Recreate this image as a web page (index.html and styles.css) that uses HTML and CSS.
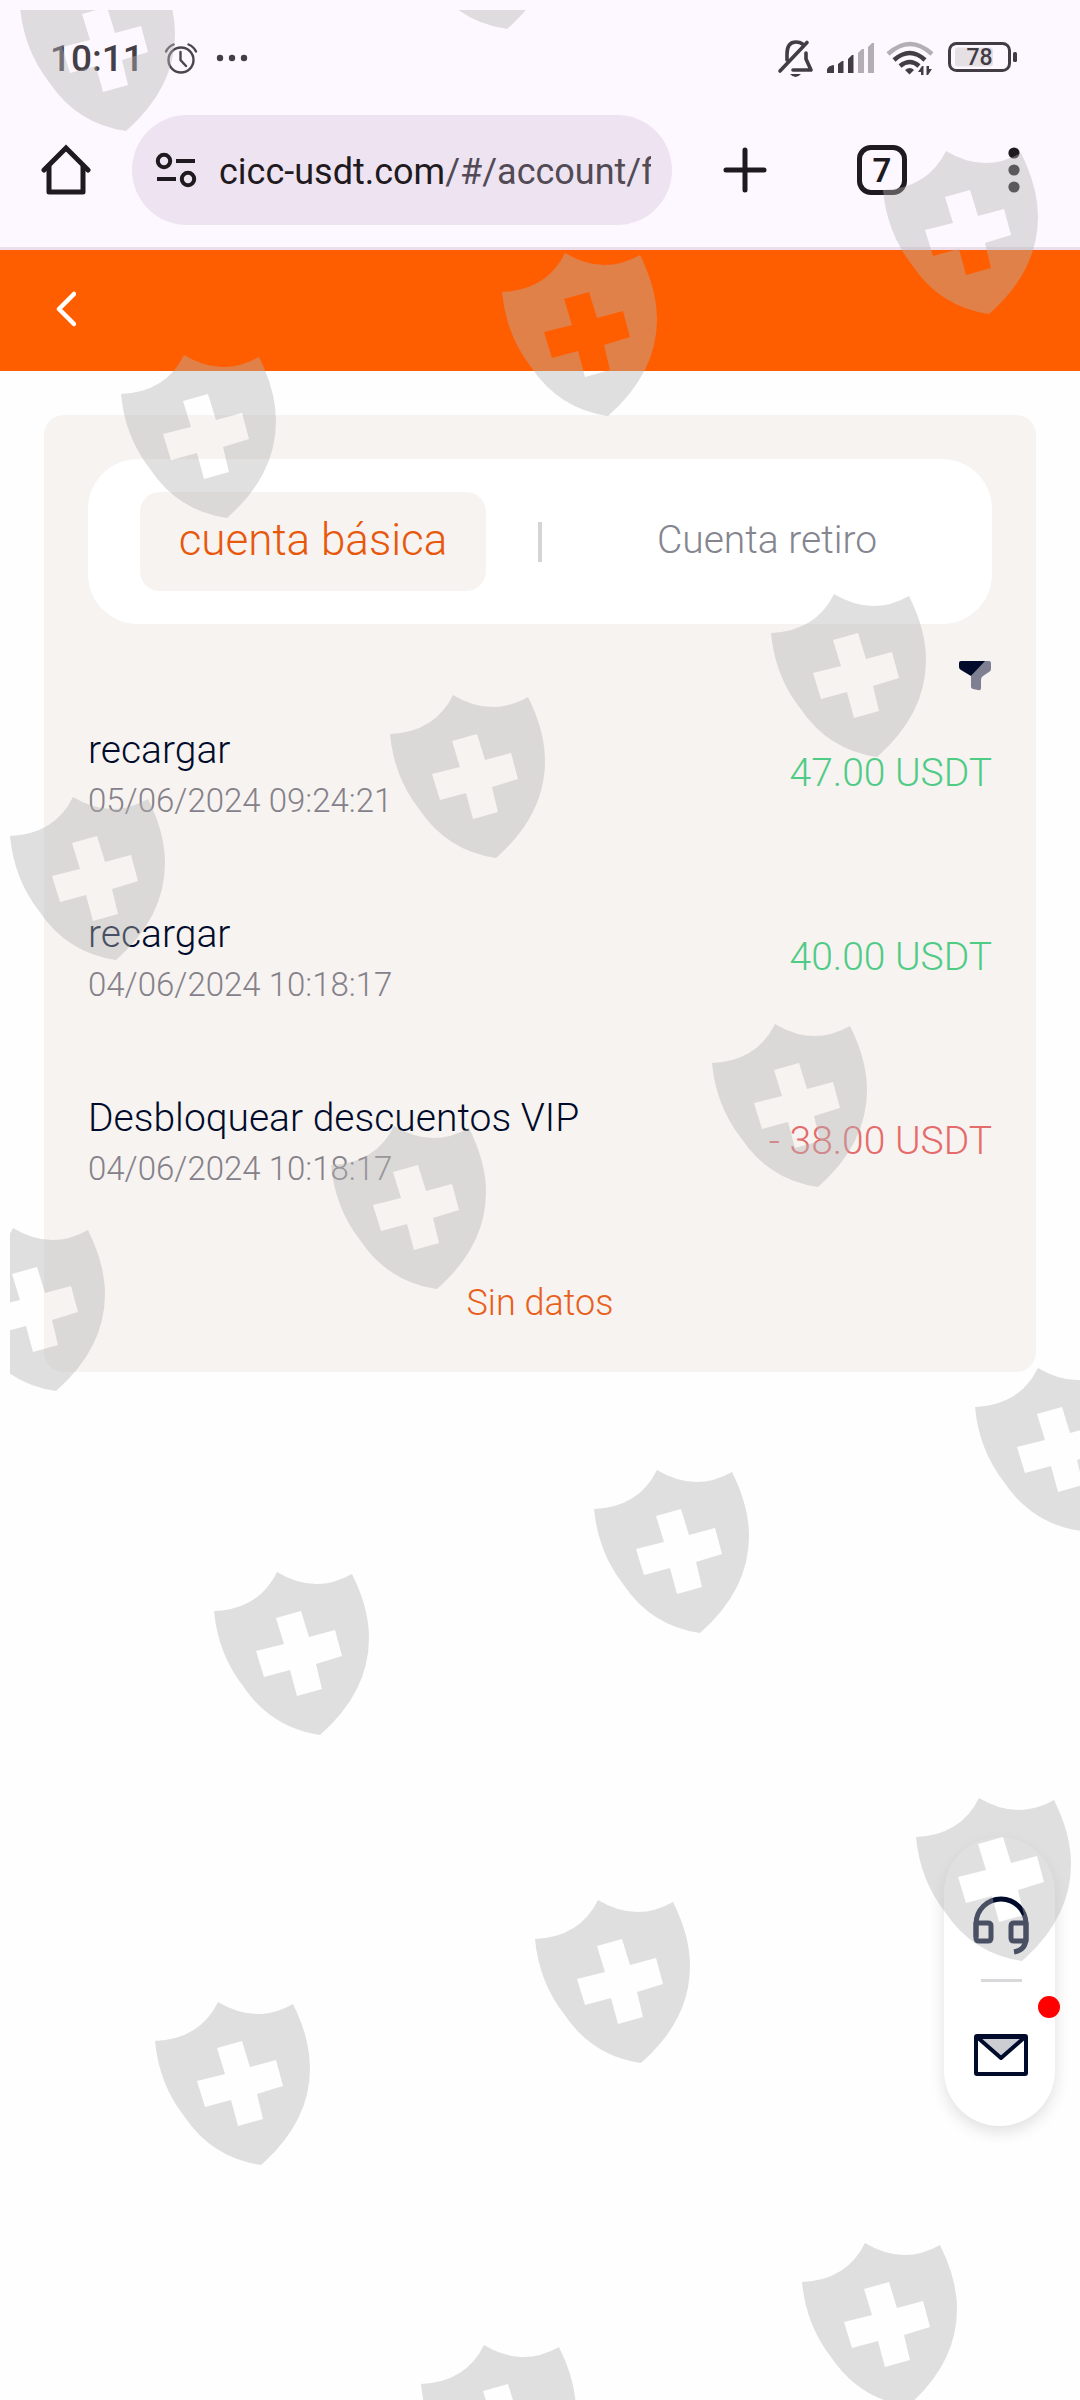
FILE: index.html
```html
<!DOCTYPE html>
<html lang="es">
<head>
<meta charset="utf-8">
<meta name="viewport" content="width=device-width, initial-scale=1">
<title>Cuenta</title>
<link rel="stylesheet" href="styles.css">
</head>
<body>
<div class="screen">
  <header class="browser">
    <div class="status">
      <span class="clock">10:11</span>
      <svg class="alarm" width="34" height="34" viewBox="0 0 34 34" fill="none" stroke="#4b454d" stroke-width="2.4" stroke-linecap="round"><circle cx="17" cy="19" r="12.5"/><path d="M16.500 11v8l5.500 6M2 10.500Q4.500 5.500 9.500 3.500M32 10.500Q29.500 5.500 24.500 3.500"/></svg>
      <svg class="more-dots" width="32" height="8" viewBox="0 0 32 8" fill="#443e46"><circle cx="4" cy="4" r="3.200"/><circle cx="16" cy="4" r="3.200"/><circle cx="28" cy="4" r="3.200"/></svg>
      <svg class="status-icons" width="242" height="44" viewBox="776 36 242 44" fill="#443c44">
        <g fill="none" stroke="#443c44" stroke-width="3.600" stroke-linecap="round" stroke-linejoin="round"><path d="M780 71L807 42.500M787 60V54C787 46 790 42 796 42c3 0 5 .8 6.500 2M806 53v6l5 11H793"/></g><path d="M790 74h11q-5.500 6-11 0z"/>
        <path d="M827 73v-4l2-2.500 4-1.500q1 0 1 1v7zM838 73v-9l4-3h1.500v12zM848 73V59l4-4h1.500v18z"/>
        <path fill="#b4adb5" d="M858 73V53l4-4h2v24zM868 73V47l4-4h2v30z"/>
        <g fill="none" stroke-width="4.500"><path stroke="#b4adb5" d="M888 54Q910 34 932 54"/><path stroke="#443c44" d="M894 60Q910 46 925 60"/><path stroke="#443c44" d="M900 66Q910 58 919 66"/></g>
        <path d="M905 70q5-4 9 0l-4.500 4.500z"/>
        <path d="M923.500 66v9h-2.500v-3h-3l4-6zM926.500 75v-9h2.500v3h3l-4 6z"/>
        <rect x="955" y="47.500" width="38" height="19" rx="3" fill="#e4e0e4"/>
        <rect x="949.500" y="43.500" width="60" height="27" rx="7" fill="none" stroke="#443c44" stroke-width="3"/>
        <rect x="1013" y="52" width="4" height="10" rx="1.500"/>
        <text x="979.500" y="65" text-anchor="middle" class="battery-text">78</text>
      </svg>
    </div>
    <nav class="toolbar">
      <button class="icon-button home" aria-label="Inicio"><svg width="50" height="52" viewBox="0 0 50 52" fill="none" stroke="#1f1a20" stroke-width="5"><path stroke-linecap="round" d="M3 26L25 4l22 22"/><path stroke-linejoin="round" d="M8 22v26h34V22"/></svg></button>
      <button class="address">
        <svg width="42" height="36" viewBox="0 0 42 36" fill="none" stroke="#1f1a20" stroke-width="4"><circle cx="9" cy="9" r="6.200"/><path d="M21 9h19M2 27h19"/><circle cx="33" cy="27" r="6.200"/></svg>
        <span class="url">cicc-usdt.com<span class="path">/#/account/f</span></span>
      </button>
      <button class="icon-button plus" aria-label="Nueva pestaña"><svg width="44" height="46" viewBox="0 0 44 46" stroke="#1f1a20" stroke-width="5" stroke-linecap="round"><path d="M22 3v40M3 23h38"/></svg></button>
      <button class="icon-button tabs">7</button>
      <button class="icon-button menu" aria-label="Menú"><svg width="12" height="46" viewBox="0 0 12 46" fill="#1f1a20"><circle cx="6" cy="6" r="5.600"/><circle cx="6" cy="23" r="5.600"/><circle cx="6" cy="40" r="5.600"/></svg></button>
    </nav>
  </header>

  <div class="title-bar">
    <a class="back" href="#" aria-label="Volver"><svg width="20" height="36" viewBox="0 0 20 36" fill="none" stroke="#fff" stroke-width="4.500" stroke-linecap="round" stroke-linejoin="round"><path d="M18 3L3 18l15 15"/></svg></a>
  </div>

  <main class="card">
    <div class="account-tabs">
      <button class="account-tab active">cuenta básica</button>
      <span class="divider"></span>
      <button class="account-tab">Cuenta retiro</button>
    </div>
    <div class="filter-row">
      <button class="icon-button" aria-label="Filtrar"><svg width="34" height="32" viewBox="0 0 34 32"><path fill="#7f7f92" d="M26 1h5q2 0 2 2v6q0 2-2 3l-6 4q-2 1-2 4v8q0 3-3 2l-5-1q-2-.5-2-2V16z"/><path fill="#000b2c" d="M3 1h24L13 16 3 10q-2-1-2-3V3q0-2 2-2z"/></svg></button>
    </div>
    <ul class="records">
      <li class="record"><div><div class="name">recargar</div><time class="date">05/06/2024 09:24:21</time></div><span class="amount income">47.00 USDT</span></li>
      <li class="record"><div><div class="name">recargar</div><time class="date">04/06/2024 10:18:17</time></div><span class="amount income">40.00 USDT</span></li>
      <li class="record"><div><div class="name">Desbloquear descuentos VIP</div><time class="date">04/06/2024 10:18:17</time></div><span class="amount expense">- 38.00 USDT</span></li>
    </ul>
    <p class="empty">Sin datos</p>
  </main>

  <aside class="contact">
    <button class="icon-button" aria-label="Soporte"><svg width="56" height="60" viewBox="0 0 56 60" fill="none" stroke="#000b2c" stroke-width="5" stroke-linejoin="round"><path d="M3 42V29a25 25 0 0 1 50 0v14q0 12-12 14"/><path d="M3 28h12q3 0 3 3v12q0 3-3 3H6q-3 0-3-3zM53 28H41q-3 0-3 3v12q0 3 3 3h12z"/></svg></button>
    <span class="contact-line"></span>
    <button class="icon-button mail" aria-label="Mensajes"><svg width="54" height="42" viewBox="0 0 54 42" stroke="#000b2c" stroke-width="4" stroke-linejoin="round"><rect x="2" y="2" width="50" height="38" rx="1" fill="#fff"/><path fill="#cccdd3" d="M3 3l24 21L51 3z"/></svg></button>
    <span class="unread"></span>
  </aside>

  <div class="watermark" aria-hidden="true">
    <svg width="1400" height="2600" viewBox="10 10 1400 2600">
      <defs>
        <path id="shield" fill-rule="evenodd" d="M0 0Q38 23 75 2Q92 36 92 66Q92 120 43 163Q-6 156-34 114Q-59 82-63 39Q-18 37 0 0ZM-1 46L7 72L-21 79L-13 105L13 98L20 124L45 117L39 92L65 84L58 58L32 65L24 39Z"/>
      </defs>
      <g fill="#b3b3b3" fill-opacity=".41">
        <use href="#shield" x="83" y="-32"/><use href="#shield" x="464" y="-134"/>
        <use href="#shield" x="946" y="151"/><use href="#shield" x="565" y="253"/><use href="#shield" x="184" y="355"/>
        <use href="#shield" x="834" y="594"/><use href="#shield" x="453" y="695"/><use href="#shield" x="73" y="797"/>
        <use href="#shield" x="775" y="1024"/><use href="#shield" x="394" y="1126"/><use href="#shield" x="13" y="1228"/>
        <use href="#shield" x="1038" y="1368"/><use href="#shield" x="657" y="1470"/><use href="#shield" x="277" y="1572"/>
        <use href="#shield" x="979" y="1798"/><use href="#shield" x="598" y="1900"/><use href="#shield" x="218" y="2002"/>
        <use href="#shield" x="865" y="2243"/><use href="#shield" x="484" y="2345"/>
      </g>
    </svg>
  </div>
</div>
</body>
</html>
```
FILE: styles.css
```css
* {
  box-sizing: border-box;
}

body {
  margin: 0;
  background: #fefefe;
  font-family: Roboto, "Liberation Sans", sans-serif;
  font-weight: 300;
}

button {
  padding: 0;
  border: 0;
  background: none;
  font: inherit;
  color: inherit;
}

svg {
  display: block;
}

.screen {
  position: relative;
  min-height: 100vh;
}

.browser {
  padding-bottom: 22px;
  border-bottom: 3px solid #ebdfee;
  background: #fdf8ff;
  color: #1f1a20;
}

.status {
  display: flex;
  align-items: center;
  height: 115px;
  padding: 0 62px 0 50px;
}

.clock {
  padding-top: 2px;
  color: #443e46;
  font-size: 37px;
  font-weight: 500;
}

.alarm {
  margin-left: 20px;
}

.more-dots {
  margin-left: 18px;
}

.status-icons {
  margin-left: auto;
}

.battery-text {
  font-size: 23px;
  font-weight: 500;
}

.toolbar {
  display: flex;
  align-items: center;
  padding: 0 60px 0 41px;
}

.icon-button {
  flex: none;
}

.address {
  display: flex;
  flex: 1;
  align-items: center;
  gap: 22px;
  min-width: 0;
  height: 110px;
  margin: 0 51px 0 41px;
  padding: 0 21px 0 23px;
  border-radius: 55px;
  background: #eee3f0;
  font-size: 36px;
  font-weight: 400;
}

.address svg {
  flex: none;
}

.url {
  flex: 1;
  padding-top: 3px;
  overflow: hidden;
  text-align: left;
  white-space: nowrap;
}

.path {
  color: #524a55;
}

.tabs {
  width: 50px;
  height: 50px;
  margin: 0 101px 0 90px;
  border: 5px solid #1f1a20;
  border-radius: 14px;
  font-size: 33px;
  font-weight: 600;
  line-height: 42px;
}

.title-bar {
  display: flex;
  align-items: center;
  height: 121px;
  padding: 0 56px 4px;
  background: #ff5e00;
}

.card {
  margin: 44px;
  padding: 44px;
  border-radius: 20px;
  background: #f7f3f0;
}

.account-tabs {
  display: grid;
  grid-template-columns: 1fr 4px 1fr;
  align-items: center;
  padding: 33px 0;
  border-radius: 50px;
  background: #fff;
}

.account-tab {
  justify-self: center;
  height: 99px;
  padding: 0 39px 4px;
  border-radius: 20px;
  color: #85858f;
  font-size: 39px;
}

.account-tab.active {
  background: #f7f3f0;
  color: #e8580c;
  font-size: 44px;
}

.divider {
  height: 40px;
  background: #d5d5d8;
}

.filter-row {
  display: flex;
  justify-content: flex-end;
  align-items: flex-end;
  height: 60px;
}

.filter-row .icon-button {
  height: 24px;
}

.records {
  margin: 0;
  padding: 0;
  list-style: none;
}

.record {
  display: flex;
  justify-content: space-between;
  align-items: center;
  padding: 41px 0;
}

.name {
  color: #000b2c;
  font-size: 39px;
  line-height: 50px;
}

.date {
  display: block;
  color: #85818a;
  font-size: 33px;
  line-height: 52px;
}

.amount {
  padding-bottom: 6px;
  font-size: 39px;
  line-height: 50px;
}

.income {
  color: #4fcb86;
}

.expense {
  color: #e56b6b;
}

.empty {
  margin: 42px 0 0;
  color: #e8601c;
  font-size: 36px;
  line-height: 50px;
  text-align: center;
}

.contact {
  position: fixed;
  right: 25px;
  bottom: 274px;
  display: flex;
  flex-direction: column;
  align-items: center;
  width: 111px;
  padding: 58px 0 50px 3px;
  border-radius: 56px;
  background: #fff;
  box-shadow: 0 6px 16px rgba(0, 0, 0, 0.12);
}

.contact-line {
  width: 41px;
  height: 3px;
  margin: 24px 0 52px;
  background: #d9d9dc;
}

.unread {
  position: absolute;
  top: 159px;
  right: -5px;
  width: 22px;
  height: 22px;
  border-radius: 50%;
  background: #f00;
}

.watermark {
  position: absolute;
  inset: 10px 0 0 10px;
  overflow: hidden;
  pointer-events: none;
}
```
